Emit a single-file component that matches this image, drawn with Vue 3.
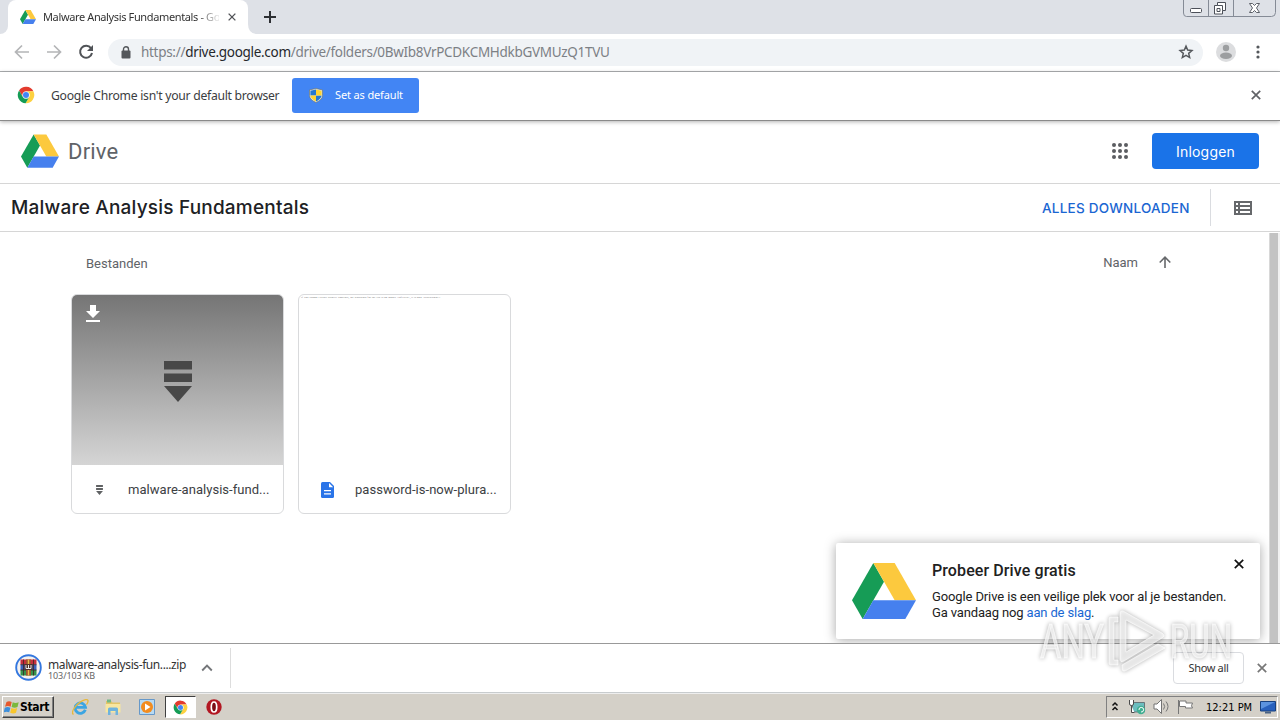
<script setup>
const files = [
  { name: 'malware-analysis-fund...', kind: 'archive' },
  { name: 'password-is-now-plura...', kind: 'document' },
]
const dots = [0, 1, 2, 3, 4, 5, 6, 7, 8]
</script>

<template>
  <div class="screen">
    <svg width="0" height="0" class="defs" aria-hidden="true">
      <defs>
        <symbol id="drive" viewBox="0 0 192 168">
          <path fill="#169c56" d="M0 112 32 168 96 56 64 0z" />
          <path fill="#fcc93e" d="M64 0h64l64 112h-64z" />
          <path fill="#4680ee" d="M32 168 64 112h128l-32 56z" />
        </symbol>
        <symbol id="chrome" viewBox="0 0 48 48">
          <circle cx="24" cy="24" r="11" fill="#fff" />
          <path fill="#e33b2e" d="M5.54 12.03A22 22 0 0 1 43.6 14H24A10 10 0 0 0 15.34 29z" />
          <path fill="#fdd140" d="M43.6 14A22 22 0 0 1 22.86 45.97L32.66 29A10 10 0 0 0 24 14z" />
          <path fill="#149c55" d="M22.86 45.97A22 22 0 0 1 5.54 12.03L15.34 29A10 10 0 0 0 32.66 29z" />
          <circle cx="24" cy="24" r="8" fill="#4285f4" />
        </symbol>
        <symbol id="cross" viewBox="0 0 10 10">
          <path d="M.8.8l8.4 8.4M9.2.8.8 9.2" fill="none" stroke="currentColor" stroke-width="1.7" />
        </symbol>
      </defs>
    </svg>

    <div class="tabstrip">
      <div class="prev-tab"></div>
      <div class="tab">
        <svg class="tab-logo"><use href="#drive" /></svg>
        <span class="tab-title">Malware Analysis Fundamentals - Go</span>
        <svg class="tab-close"><use href="#cross" /></svg>
      </div>
      <svg class="new-tab" viewBox="0 0 36 34"><path d="M0 34h10Q0 34 0 24z" fill="#fff" /><path d="M22 11v12M16 17h12" stroke="#2d2f33" stroke-width="2" /></svg>
      <svg class="win-controls" viewBox="0 0 94 18">
        <path d="M.5 0v13q0 3.500 3 3.500h85q4 0 4-4V0M25.500 0v16M50.500 0v16" fill="none" stroke="#858b96" />
        <rect x="7.500" y="8.500" width="11" height="4" rx="1" fill="#fff" stroke="#4c5059" />
        <path d="M34.500 2.500h8v8h-3v3.500h-8v-8.500h3z" fill="#fff" stroke="#4c5059" />
        <path d="M34.500 5.500h5v5M34 8.500h3v3h-3z" fill="none" stroke="#4c5059" />
        <path d="M66.500 3.500h3l2 2 2-2h3l-3 4.500 3 4.500h-3l-2-2-2 2h-3l3-4.500z" fill="#fff" stroke="#4c5059" stroke-width=".9" />
      </svg>
    </div>

    <div class="toolbar">
      <svg class="nav" viewBox="0 0 96 24" fill="none" stroke="#b4b5b7" stroke-width="1.700">
        <path d="M29 12H16M22 5.500 15.500 12l6.500 6.500M47 12h13M54 5.500l6.500 6.500-6.500 6.500" />
        <path d="M91 8.200A6 6 0 1 0 92 13" stroke="#505357" stroke-width="2" />
        <path d="M93 5v6h-6z" fill="#505357" stroke="none" />
      </svg>
      <div class="omnibox">
        <svg class="lock" viewBox="0 0 10 13"><rect y="4.500" x=".5" width="9" height="8" rx="1" fill="#54575b" /><path d="M2.500 5V3.200a2.500 2.500 0 0 1 5 0V5" fill="none" stroke="#54575b" stroke-width="1.400" /></svg>
        <span class="url">https://<b>drive.google.com</b>/drive/folders/0BwIb8VrPCDKCMHdkbGVMUzQ1TVU</span>
        <svg class="star" viewBox="0 0 24 24"><path d="M12 3.200l2.500 5.900 6.400.6-4.900 4.300 1.500 6.300-5.500-3.400-5.500 3.400 1.500-6.300-4.900-4.300 6.400-.6z" fill="none" stroke="#55585c" stroke-width="2.200" /></svg>
      </div>
      <svg class="avatar" viewBox="0 0 20 20"><circle cx="10" cy="10" r="10" fill="#dcdddf" /><circle cx="10" cy="6" r="3.200" fill="#9c9ea0" /><ellipse cx="10" cy="13.800" rx="6" ry="3.200" fill="#9c9ea0" /></svg>
      <svg class="menu" viewBox="0 0 4 16" fill="#55585c"><circle cx="2" cy="3" r="1.600" /><circle cx="2" cy="8" r="1.600" /><circle cx="2" cy="13" r="1.600" /></svg>
    </div>

    <div class="infobar">
      <svg class="info-logo"><use href="#chrome" /></svg>
      <span class="info-text">Google Chrome isn't your default browser</span>
      <button class="default-btn">
        <svg viewBox="0 0 14 15"><path d="M7 .5 13.500 2v5.500q0 4-6.500 7-6.500-3-6.500-7V2z" fill="#dfe9f2" /><path d="M7 1.500v6H1.400V2.700zM7 7.500h5.600q-.5 3.500-5.600 6z" fill="#2478d0" /><path d="M7 1.500v6h5.600V2.700zM7 7.500H1.400q.5 3.500 5.600 6z" fill="#ffd430" /><path d="M7 .5 13.500 2v5.500q0 4-6.500 7-6.500-3-6.500-7V2z" fill="none" stroke="#716f55" stroke-width=".6" /></svg>
        <span>Set as default</span>
      </button>
      <svg class="info-close"><use href="#cross" /></svg>
    </div>

    <main class="page">
      <header class="drive-head">
        <svg class="drive-logo"><use href="#drive" /></svg>
        <span class="brand">Drive</span>
        <svg class="apps" viewBox="0 0 16 16" fill="#5b5d61"><circle v-for="d in dots" :key="d" :cx="2 + (d % 3) * 6" :cy="2 + Math.floor(d / 3) * 6" r="2" /></svg>
        <button class="login">Inloggen</button>
      </header>
      <div class="title-bar">
        <h1>Malware Analysis Fundamentals</h1>
        <span class="download-all">ALLES DOWNLOADEN</span>
        <div class="list-toggle">
          <svg viewBox="0 0 18 14"><rect width="18" height="14" fill="#66686b" /><path d="M2 2h2v2H2zM6 2h10v2H6zM2 6h2v2H2zM6 6h10v2H6zM2 10h2v2H2zM6 10h10v2H6z" fill="#fff" /></svg>
        </div>
      </div>
      <div class="content">
        <div class="listing">
          <div class="columns">
            <span class="files-label">Bestanden</span>
            <span class="sort">Naam</span>
            <svg class="sort-arrow" viewBox="0 0 12 12"><path d="M6 12V1.500M.7 6.500 6 1.200l5.300 5.300" fill="none" stroke="#66686b" stroke-width="1.600" /></svg>
          </div>
          <div class="cards">
            <article v-for="f in files" :key="f.name" class="card">
              <div class="preview" :class="f.kind">
                <template v-if="f.kind === 'archive'">
                  <svg class="dl" viewBox="0 0 14 17" fill="#fff"><path d="M4 0h6v6h4l-7 7-7-7h4zM0 15h14v2H0z" /></svg>
                  <svg class="big" viewBox="0 0 28 41" fill="#484848"><path d="M0 0h28v8.500H0zM0 12.500h28V21H0zM0 25h28L14 41z" /></svg>
                </template>
                <span v-else class="tiny">If you cannot extract archive contents, the password for the zip is no longer "infected", it is now "pluralsight"!</span>
              </div>
              <div class="label">
                <svg v-if="f.kind === 'archive'" class="kind-archive" viewBox="0 0 28 41" fill="#606264"><path d="M0 0h28v8.500H0zM0 12.500h28V21H0zM0 25h28L14 41z" /></svg>
                <svg v-else class="kind-doc" viewBox="0 0 13 16"><path d="M1.500 0H9l4 4v10.500q0 1.500-1.500 1.500h-10Q0 16 0 14.500v-13Q0 0 1.500 0z" fill="#2a74e8" /><path d="M8 1v4.200h4.200zM3 8h7v1.300H3zM3 11.300h7v1.300H3z" fill="#fff" /></svg>
                <span>{{ f.name }}</span>
              </div>
            </article>
          </div>
        </div>
        <div class="scrollbar"></div>
      </div>
    </main>

    <div class="shelf">
      <svg class="zip" viewBox="0 0 27 27">
        <circle cx="13.500" cy="13.500" r="12.300" fill="#f5f1ee" stroke="#3377df" stroke-width="1.900" />
        <path d="M5.500 5.500h16v5H5.500z" fill="#c22e3d" /><path d="M5.500 10.500h16v5.500H5.500z" fill="#3c62bd" /><path d="M5.500 16h16v5.500H5.500z" fill="#35914a" />
        <path d="M5.500 10.700h16M5.500 16h16M8.500 5.500v16M18.500 5.500v16" stroke="#3a2525" stroke-width=".8" />
        <path d="M11 5.500h5v16h-5z" fill="#9e5230" /><path d="M12.800 5.500h1.400v16h-1.400z" fill="#ecbd47" /><path d="M9.500 10h8v6h-8z" fill="#51312a" /><path d="M11 11v3.500h5V11M13.500 11v3" fill="none" stroke="#eee" />
      </svg>
      <div class="dl-info"><span class="dl-name">malware-analysis-fun....zip</span><span class="dl-size">103/103 KB</span></div>
      <svg class="chev" viewBox="0 0 12 8"><path d="M1.200 6.500 6 1.700l4.800 4.800" fill="none" stroke="#747679" stroke-width="1.900" /></svg>
      <div class="shelf-sep"></div>
      <button class="show-all">Show all</button>
      <svg class="shelf-close"><use href="#cross" /></svg>
    </div>

    <div class="taskbar">
      <div class="start">
        <svg viewBox="0 0 16 15"><path d="M2.500 2Q5 .5 7.700 2L6.600 6.700Q4 5.300 1 6.700z" fill="#e7592d" /><path d="M8.700 2.300Q11.500 3.700 14.700 2.200L13.500 7Q10.700 8.300 7.600 7z" fill="#7bb83c" /><path d="M.8 7.700Q3.600 6.300 6.400 7.700L5.200 12.300Q2.600 11-.3 12.300z" fill="#3d8fdb" /><path d="M7.400 8Q10.300 9.300 13.200 8l-1.200 4.800Q9.300 14 6.200 12.700z" fill="#f8c62c" /></svg>
        <b>Start</b>
      </div>
      <svg class="ql ie" viewBox="0 0 18 18"><path d="M14.300 11.800A5.200 5.200 0 1 1 14.500 9.300H4.500" fill="none" stroke="#3ca5e2" stroke-width="2.800" /><path d="M2.500 16.500C-1.500 14 7 3.500 14.500 1.700c3.800-.7 2.700 2.700 1 5" fill="none" stroke="#e7b83c" stroke-width="1.300" /></svg>
      <svg class="ql folder" viewBox="0 0 18 18"><path d="M2 3h5l1.500 1.500H16V14H2z" fill="#e2c568" /><path d="M3 1.500h4v3H3z" fill="#72b886" /><path d="M1.500 6h15v8.500h-15z" fill="#f7e6a0" /><path d="M4 17v-6q0-1.500 1.500-1.500h7q1.500 0 1.500 1.500v6h-2.500v-4h-5v4z" fill="#6fb3dd" /></svg>
      <svg class="ql wmp" viewBox="0 0 18 18"><path d="M1.500 1.500h15v15h-15z" fill="#b7daf3" stroke="#6698c9" /><circle cx="9" cy="9" r="6" fill="#f28c1f" /><path d="M7 5.500 12.500 9 7 12.500z" fill="#fff" /></svg>
      <div class="active-task"><svg><use href="#chrome" /></svg></div>
      <svg class="ql opera" viewBox="0 0 16 16"><circle cx="8" cy="8" r="7.700" fill="#b21722" /><ellipse cx="8" cy="8" rx="2.700" ry="5" fill="#7b0c14" stroke="#fff" stroke-width="1.700" /></svg>
      <div class="tray">
        <svg class="tray-icons" viewBox="0 0 92 20">
          <path d="M5.500 8.500 8 6l2.500 2.500M5.500 13 8 10.500l2.500 2.500" fill="none" stroke="#111" stroke-width="1.500" />
          <path d="M25.500 5.500h12v9.500h-12z" fill="#6cbdbf" stroke="#68757a" /><path d="M22.500 3v4q0 1.500 2 1.500t2-1.500V3M24.500 8.500V15.500h3" fill="#fff" stroke="#4b4b4b" /><circle cx="34" cy="13" r="4.200" fill="#3fae91" /><path d="M32 13a2.300 2.300 0 1 1 2 2" fill="none" stroke="#fff" />
          <path d="M47 7h3l4.500-4.500v14L50 12h-3z" fill="#fff" stroke="#737373" /><path d="M56.500 6.500q2.300 3 0 6M59 4.500q4 5 0 10" fill="none" stroke="#777" />
          <path d="M71.500 3v14" stroke="#777" /><path d="M72.500 4h6.500v2h6.500q-2 3 0 5H78.500V9.500h-6z" fill="#fff" stroke="#777" />
        </svg>
        <span class="clock">12:21 PM</span>
        <svg class="desktop" viewBox="0 0 16 13"><path d="M.5.5h15v9.500H.5z" fill="#2861bd" stroke="#17417f" /><path d="M1 1h14L1 8z" fill="#5b93df" /><path d="M5 11.500h6" stroke="#496285" stroke-width="2" /></svg>
      </div>
    </div>

    <aside class="promo">
      <svg class="promo-logo"><use href="#drive" /></svg>
      <div class="promo-copy">
        <strong>Probeer Drive gratis</strong>
        <p>Google Drive is een veilige plek voor al je bestanden.</p>
        <p class="second">Ga vandaag nog <a>aan de slag</a>.</p>
      </div>
      <svg class="promo-close"><use href="#cross" /></svg>
    </aside>

    <svg class="watermark" viewBox="0 0 204 70">
      <g fill="#fff" fill-opacity=".65" stroke="#fff" stroke-opacity=".6" stroke-width="1">
        <text x="4" y="50" font-size="49" textLength="64" lengthAdjust="spacingAndGlyphs">ANY</text>
        <text x="134" y="50" font-size="49" textLength="62" lengthAdjust="spacingAndGlyphs">RUN</text>
        <path fill-rule="evenodd" d="M73 11q0-2 2-2h7v5h-4v38h4v5h-7q-2 0-2-2zM84 6q0-5 5-2l37 21q4 3 0 5L88 53q-4 2-4-2zM90 12v32l28-17zM86 57l36-21 7 4-38 22q-5 3-5-2z" />
      </g>
    </svg>
  </div>
</template>

<style>
html, body { overflow: hidden; }
</style>

<style scoped>
* { box-sizing: border-box; }
svg { display: block; flex: none; }
span, b, strong, h1, p { white-space: nowrap; }
button { border: 0; padding: 0; margin: 0; }
.screen { width: 1280px; height: 720px; position: relative; display: flex; flex-direction: column; background: #fff; font-family: "Noto Sans", sans-serif; overflow: hidden; }
.defs { position: absolute; }
.tabstrip { height: 34px; background: #dee1e7; display: flex; }
.prev-tab { width: 8px; background: #fff; }
.prev-tab::before { content: ""; display: block; height: 34px; background: #dee1e7; border-bottom-right-radius: 8px; }
.tab { width: 240px; background: #fff; border-radius: 8px 8px 0 0; display: flex; align-items: center; padding-left: 12px; }
.tab-logo { width: 16px; height: 14px; }
.tab-title { margin-left: 7px; width: 176px; overflow: hidden; font-size: 11px; line-height: 18px; letter-spacing: -.37px; color: #333; -webkit-mask-image: linear-gradient(90deg, #000 154px, rgba(0, 0, 0, .15) 174px); mask-image: linear-gradient(90deg, #000 154px, rgba(0, 0, 0, .15) 174px); }
.tab-close { width: 8px; height: 8px; margin-left: 9px; color: #515357; }
.new-tab { width: 36px; height: 34px; }
.win-controls { width: 94px; height: 18px; margin-left: auto; margin-right: 3px; }
.toolbar { height: 38px; border-bottom: 1px solid #aeb0b2; display: flex; align-items: center; padding-bottom: 1px; }
.nav { width: 96px; height: 24px; }
.omnibox { margin-left: 12px; width: 1095px; height: 27px; border-radius: 14px; background: #f0f3f6; display: flex; align-items: center; }
.lock { width: 10px; height: 13px; margin-left: 13px; }
.url { margin-left: 10px; font-size: 13.500px; letter-spacing: -.3px; color: #7c8085; line-height: 20px; }
.url b { font-weight: 400; color: #25272b; }
.star { width: 16px; height: 16px; margin-left: auto; margin-right: 9px; }
.avatar { width: 20px; height: 20px; margin-left: 13px; }
.menu { width: 4px; height: 16px; margin-left: 20px; }
.infobar { height: 49px; border-bottom: 1px solid #8a8a8a; display: flex; align-items: center; position: relative; padding-bottom: 2px; box-shadow: 0 1px 4px rgba(0, 0, 0, .3); }
.info-logo { width: 18px; height: 18px; margin-left: 17px; }
.info-text { width: 241px; margin-left: 16px; font-size: 12.200px; letter-spacing: -.28px; color: #3b3d41; }
.default-btn { width: 127px; height: 35px; background: #4285f4; border-radius: 3px; color: #fff; display: flex; align-items: center; font: 11px "Noto Sans", sans-serif; letter-spacing: -.14px; }
.default-btn svg { width: 14px; height: 15px; margin: 0 12px 0 17px; }
.default-btn span { padding-bottom: 2px; }
.info-close { width: 10px; height: 10px; margin-left: auto; margin-right: 19px; color: #606266; }
.page { height: 522px; display: flex; flex-direction: column; }
.drive-head { height: 63px; border-bottom: 1px solid #d6d6d6; display: flex; align-items: center; padding: 0 21px 2px; }
.drive-logo { width: 38px; height: 34px; }
.brand { margin-left: 9px; font: 22px Roboto, sans-serif; letter-spacing: .2px; color: #5f6368; }
.apps { width: 16px; height: 16px; margin-left: auto; }
.login { width: 107px; height: 36px; margin-left: 24px; border-radius: 4px; background: #1a73e8; color: #fff; font: 14px Inter, sans-serif; letter-spacing: .2px; }
.title-bar { height: 48px; border-bottom: 1px solid #d6d6d6; display: flex; align-items: center; padding-left: 11px; }
h1 { margin: 0; font: 500 19px Inter, sans-serif; letter-spacing: .2px; color: #202124; }
.download-all { margin-left: auto; width: 168px; font: 500 13.500px Inter, sans-serif; letter-spacing: .24px; color: #1a66d2; }
.list-toggle { width: 70px; height: 37px; border-left: 1px solid #dadce0; display: flex; align-items: center; padding-left: 23px; }
.list-toggle svg { width: 18px; height: 14px; }
.content { flex: 1; display: flex; }
.listing { flex: 1; padding: 20px 0 0 71px; }
.columns { height: 20px; display: flex; align-items: center; color: #5f6368; font: 13px Roboto, sans-serif; padding-left: 15px; }
.files-label { padding-top: 2px; }
.sort { margin-left: auto; }
.sort-arrow { width: 12px; height: 12px; margin: 0 98px 0 21px; }
.cards { display: flex; gap: 14px; margin-top: 22px; }
.card { width: 213px; height: 220px; border: 1px solid #d9dadc; border-radius: 6px; overflow: hidden; }
.preview { height: 170px; }
.archive { background: linear-gradient(#757575, #d5d5d5); padding: 10px 0 0 14px; }
.dl { width: 14px; height: 17px; }
.big { width: 28px; height: 41px; margin: 39px 0 0 78px; }
.tiny { display: block; width: 145px; margin-left: 2px; font: 2.800px/5px "Liberation Serif", serif; letter-spacing: .14px; color: #666; }
.label { height: 49px; display: flex; align-items: center; color: #3c4043; font: 13px Roboto, sans-serif; letter-spacing: .04px; }
.kind-archive { width: 7px; height: 10px; margin: 0 25px 0 24px; }
.kind-doc { width: 13px; height: 16px; margin: 0 21px 0 22px; }
.scrollbar { width: 11px; border-left: 1px solid #d8d8d8; border-right: 2px solid #f1f1f1; background: #c3c3c3; margin-top: 1px; }
.shelf { height: 50px; border-top: 1px solid #999; border-bottom: 1px solid #c8ccce; display: flex; align-items: center; padding-bottom: 1px; }
.zip { width: 27px; height: 27px; margin-left: 15px; }
.dl-info { width: 153px; margin-left: 6px; padding-top: 3px; display: flex; flex-direction: column; }
.dl-name { font-size: 12px; line-height: 13px; letter-spacing: -.41px; color: #333; }
.dl-size { font-size: 9px; line-height: 9px; letter-spacing: -.1px; color: #666; }
.chev { width: 12px; height: 8px; }
.shelf-sep { width: 1px; height: 40px; background: #ddd; margin-left: 17px; }
.show-all { width: 71px; height: 32px; margin-left: auto; border: 1px solid #dadce0; border-radius: 4px; background: #fff; color: #333; font: 11px "Noto Sans", sans-serif; letter-spacing: -.34px; padding-bottom: 1px; }
.shelf-close { width: 10px; height: 10px; margin: 0 13px; color: #777; }
.taskbar { flex: 1; border-top: 1px solid #eee; background: #d4d0c8; display: flex; align-items: center; }
.start { width: 52px; height: 22px; margin-left: 2px; border: 1px solid; border-color: #fff #404040 #404040 #fff; box-shadow: inset -1px -1px #808080; display: flex; align-items: center; color: #000; }
.start svg { width: 16px; height: 15px; margin-left: 1px; }
.start b { margin-left: 0; font: bold 12px "DejaVu Sans Condensed", "DejaVu Sans", sans-serif; letter-spacing: -.35px; }
.ql { width: 18px; height: 18px; }
.ie { margin-left: 17px; }
.folder { margin-left: 15px; }
.wmp { margin-left: 16px; }
.active-task { width: 31px; height: 22px; margin-left: 9px; border: 1px solid; border-color: #404040 #fff #fff #404040; background: #fff; display: flex; align-items: center; justify-content: center; }
.active-task svg { width: 15px; height: 15px; }
.opera { width: 16px; height: 16px; margin-left: 10px; }
.tray { margin-left: auto; margin-right: 2px; width: 172px; height: 22px; border: 1px solid; border-color: #808080 #fff #fff #808080; display: flex; align-items: center; }
.tray-icons { width: 92px; height: 20px; }
.clock { width: 54px; margin-left: 7px; font: 11px "DejaVu Sans Condensed", "DejaVu Sans", sans-serif; color: #000; }
.desktop { width: 16px; height: 13px; }
.promo { position: absolute; left: 836px; top: 543px; width: 424px; height: 96px; background: #fff; border-radius: 2px; box-shadow: 0 1px 12px rgba(0, 0, 0, .35); display: flex; padding: 20px 16px; clip-path: inset(-20px -9px -4px -20px); }
.promo-logo { width: 64px; height: 56px; }
.promo-copy { margin: -2px 0 0 16px; font: 13px/16px Roboto, sans-serif; color: #212121; }
.promo-copy strong { display: block; font-size: 16px; line-height: 20px; font-weight: 500; letter-spacing: .1px; }
.promo-copy p { margin: 8px 0 0; letter-spacing: -.12px; }
.promo-copy .second { margin: 0; letter-spacing: -.15px; }
.promo-copy a { color: #1967d2; }
.promo-close { width: 10px; height: 10px; margin: -4px 0 0 auto; color: #111; }
.watermark { position: absolute; left: 1036px; top: 608px; width: 204px; height: 70px; font-family: Roboto, sans-serif; filter: drop-shadow(0 0 2px rgba(0, 0, 0, .45)); }
</style>
